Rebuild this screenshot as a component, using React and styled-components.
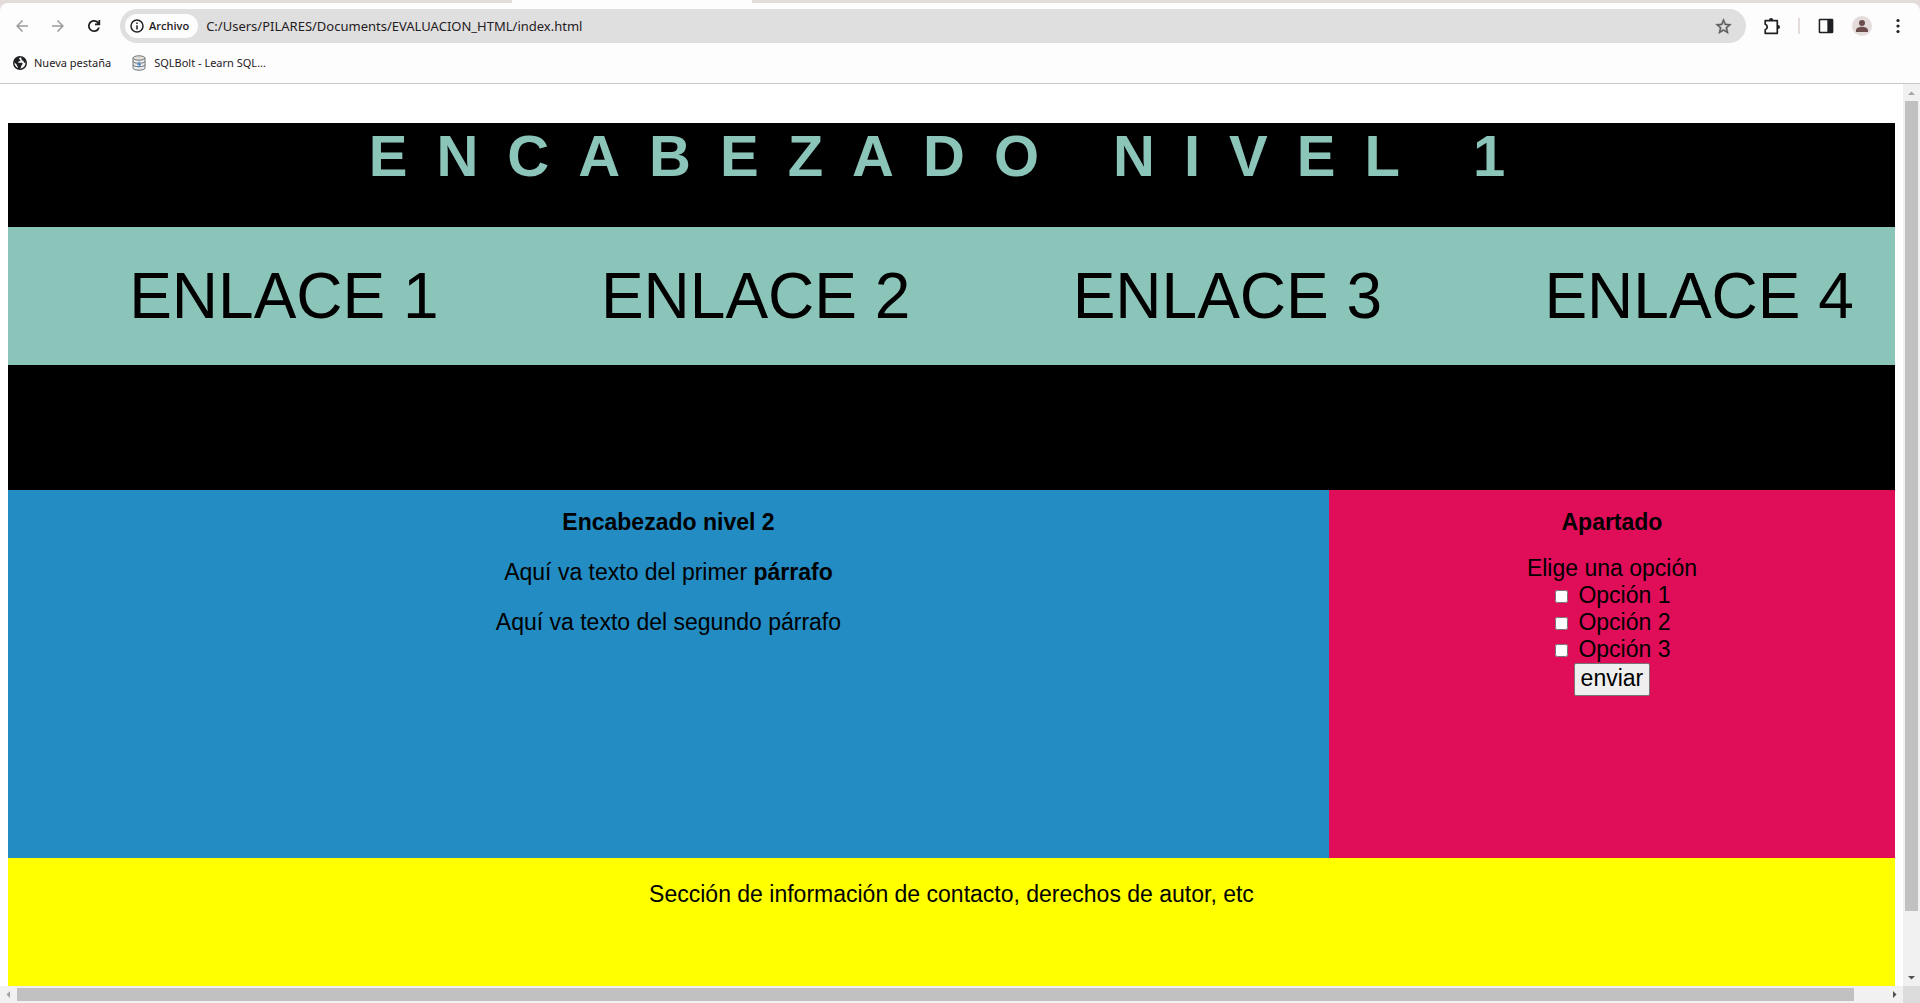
import React from "react";
import styled, { createGlobalStyle } from "styled-components";

const GlobalStyle = createGlobalStyle`
  * { box-sizing: border-box; }
  body { margin: 0; background: #fff; }
`;

const chipFont = `"Open Sans", "Noto Sans", sans-serif`;
const uiFont = `"Noto Sans", "Open Sans", sans-serif`;
const pageFont = `"Liberation Sans", Arial, sans-serif`;

const Window = styled.div`
  display: flex;
  flex-direction: column;
  height: 100vh;
  overflow: hidden;
  background: #e4dcda;
`;

const TabStrip = styled.div`
  display: flex;
  height: 3px;
  padding-left: 512px;
`;

const ActiveTab = styled.div`
  width: 240px;
  background: #fdfdfd;
`;

const Chrome = styled.header`
  flex: none;
  background: #fdfdfd;
  border-bottom: 1px solid #c9c9c9;
  border-radius: 8px 8px 0 0;
  font-family: ${uiFont};
  color: #1f2023;
`;

const Toolbar = styled.div`
  display: flex;
  align-items: center;
  padding: 6px 8px;
`;

const Group = styled.div`
  display: flex;
  align-items: center;
  gap: ${(p) => p.$gap}px;
`;

const IconButton = styled.button`
  display: grid;
  place-items: center;
  width: ${(p) => p.$width || 28}px;
  height: 28px;
  padding: 0;
  border: 0;
  background: none;
  color: ${(p) => p.$color || "#1f2023"};
`;

const AddressBar = styled.div`
  display: flex;
  align-items: center;
  flex: 1;
  height: 34px;
  margin: 0 12px;
  padding: 0 9px 0 5px;
  border-radius: 17px;
  background: #dfdfdf;
`;

const SiteChip = styled.button`
  display: flex;
  align-items: center;
  gap: 5px;
  height: 24px;
  padding: 0 9px 0 5px;
  border: 0;
  border-radius: 12px;
  background: #fdfdfd;
  color: #1f2023;
  font: 600 11px/24px ${chipFont};
`;

const Address = styled.input`
  flex: 1;
  min-width: 0;
  padding: 0 8px;
  border: 0;
  outline: 0;
  background: none;
  color: #1f2023;
  font: 13px/20px ${uiFont};
`;

const Separator = styled.span`
  width: 2px;
  height: 16px;
  background: #e4dcda;
`;

const Avatar = styled.span`
  display: grid;
  place-items: center;
  width: 20px;
  height: 20px;
  border-radius: 50%;
  background: #e4dcda;
`;

const Bookmarks = styled.nav`
  display: flex;
  gap: 20px;
  height: 34px;
  padding: 4px 13px 0;
`;

const Bookmark = styled.a`
  display: flex;
  align-items: center;
  gap: 7px;
  height: 20px;
  color: #1f2023;
  font: 11px/20px ${uiFont};
  text-decoration: none;
`;

const Viewport = styled.div`
  display: grid;
  grid-template: minmax(0, 1fr) 17px / minmax(0, 1fr) 17px;
  flex: 1;
  min-height: 0;
  background: #fff;
`;

const Page = styled.div`
  display: flex;
  flex-direction: column;
  overflow: hidden;
  padding: 39px 8px 0;
  background: #fff;
  color: #000;
  font: 23px/27px ${pageFont};
  text-align: center;
`;

const Banner = styled.header`
  flex: none;
  padding-bottom: 125px;
  background: #000;
`;

const Title = styled.h1`
  margin: 0;
  padding-bottom: 38px;
  color: #8bc4b9;
  font-size: 58px;
  line-height: 66px;
  letter-spacing: 29px;
  white-space: nowrap;
`;

const Links = styled.ul`
  display: grid;
  grid-template-columns: repeat(4, 1fr);
  margin: 0;
  padding: 32px 0;
  background: #8bc4b9;
  list-style: none;
`;

const LinkItem = styled.li`
  min-width: 0;
  padding-left: 80px;
`;

const PageLink = styled.a`
  color: #000;
  font-size: 64px;
  line-height: 74px;
  text-decoration: none;
  white-space: nowrap;
`;

const Columns = styled.div`
  display: grid;
  grid-template-columns: 7fr 3fr;
  flex: none;
  min-height: 368px;
`;

const Article = styled.main`
  display: flex;
  flex-direction: column;
  gap: 23px;
  padding-top: 19px;
  background: #228cc3;
`;

const Aside = styled.aside`
  padding-top: 19px;
  background: #e00d59;
`;

const Heading = styled.h2`
  margin: 0;
  font-size: 23px;
`;

const Text = styled.p`
  margin: 0;
`;

const Form = styled.form`
  display: flex;
  flex-direction: column;
  align-items: center;
  padding-top: 19px;
`;

const Option = styled.label`
  display: flex;
  align-items: center;
  gap: 10px;
  padding-left: 2px;
`;

const Check = styled.input`
  width: 13px;
  height: 13px;
  margin: 2px 0 0;
`;

const Submit = styled.button`
  height: 33px;
  padding: 1px 6px 3px;
  border: 1px solid #767676;
  border-radius: 2px;
  background: #efefef;
  color: #000;
  font: 23px/27px ${pageFont};
`;

const Footer = styled.footer`
  flex: 1;
  padding-top: 23px;
  background: #ff0;
`;

const Track = styled.div`
  display: flex;
  flex-direction: ${(p) => (p.$vertical ? "column" : "row")};
  background: #f1f1f1;
`;

const ArrowButton = styled.button`
  display: grid;
  place-items: center;
  flex: none;
  width: 17px;
  height: 17px;
  padding: 0;
  border: 0;
  background: none;
  color: ${(p) => (p.$active ? "#505050" : "#a3a3a3")};
`;

const Rail = styled.div`
  display: flex;
  flex-direction: ${(p) => (p.$vertical ? "column" : "row")};
  flex: 1;
  padding: ${(p) => (p.$vertical ? "0 2px" : "2px 0")};
`;

const Thumb = styled.div`
  flex: 0 0 ${(p) => p.$share}%;
  background: #c1c1c1;
`;

const Corner = styled.div`
  background: #dcdcdc;
`;

const Svg = ({ size = 16, box = 24, children, ...rest }) => (
  <svg width={size} height={size} viewBox={`0 0 ${box} ${box}`} fill="currentColor" aria-hidden="true" {...rest}>
    {children}
  </svg>
);

const BackIcon = () => (
  <Svg size={18}><path d="M20 11H7.8l5.6-5.6L12 4l-8 8 8 8 1.4-1.4L7.8 13H20z" /></Svg>
);
const ForwardIcon = () => (
  <Svg size={18}><path d="M4 11h12.2l-5.6-5.6L12 4l8 8-8 8-1.4-1.4 5.6-5.6H4z" /></Svg>
);
const ReloadIcon = () => (
  <Svg size={18}>
    <path d="M12 20a8 8 0 1 1 5.7-13.6L18 6.700V4h2.300v7h-7V8.700h3.300A5.700 5.700 0 1 0 17.400 14h2.350A8 8 0 0 1 12 20z" />
  </Svg>
);
const InfoIcon = () => (
  <Svg size={14} box={14}>
    <circle cx="7" cy="7" r="6" fill="none" stroke="currentColor" strokeWidth="1.500" />
    <path d="M6.250 6.200h1.500v4.200h-1.500zM6.250 3.500h1.500V5h-1.500z" />
  </Svg>
);
const StarIcon = () => (
  <Svg size={19}>
    <path
      d="M22 9.240l-7.190-.62L12 2 9.190 8.630 2 9.240l5.460 4.730L5.820 21 12 17.270 18.180 21l-1.630-7.030zM12 15.400l-3.760 2.270 1-4.280-3.320-2.880 4.380-.38L12 6.100l1.710 4.040 4.380.38-3.320 2.880 1 4.280z"
      stroke="currentColor"
      strokeWidth=".5"
    />
  </Svg>
);
const PuzzleIcon = () => (
  <Svg size={18} box={18}>
    <path d="M2.200 3.700h12.100v12.600H2.200v-3.500c2.700-.9 2.700-4.700 0-5.600z" fill="none" stroke="currentColor" strokeWidth="1.700" strokeLinejoin="round" />
    <path d="M6 3a2.100 2.100 0 0 1 4.200 0zM15 8a2 2 0 0 1 0 4z" />
  </Svg>
);
const PanelIcon = () => (
  <Svg size={16}>
    <path d="M3 1h18a2 2 0 0 1 2 2v18a2 2 0 0 1-2 2H3a2 2 0 0 1-2-2V3a2 2 0 0 1 2-2zm0.300 2.300v17.400h10.700V3.300z" fillRule="evenodd" />
  </Svg>
);
const PersonIcon = () => (
  <Svg size={18} color="#6d4c4e">
    <circle cx="12" cy="8" r="4" />
    <path d="M4 20v-2.500c0-3 5-4.500 8-4.500s8 1.500 8 4.500V20z" />
  </Svg>
);
const MenuIcon = () => (
  <Svg size={16} box={16}>
    <circle cx="8" cy="2.500" r="1.600" /><circle cx="8" cy="8" r="1.600" /><circle cx="8" cy="13.500" r="1.600" />
  </Svg>
);
const GlobeIcon = () => (
  <Svg size={14} box={14}>
    <circle cx="7" cy="7" r="7" />
    <path d="M8.200 1.600C5.500 1.700 5.800 3.500 7.200 3.900c.8.300-.2 1.500-1.500 1.500-.8 0-.7 1.100-.2 1.300h3c1.500 0 1.400 1.600.4 2.200-.9.400-.4 2.100-1.700 3.600 3.300 0 5.500-2.900 5.200-5.900-.5.300-1.500.2-1.700-.7-.2-1-.5-1.300-1.400-1.300-.8 0-.8-1.900-1.100-3zM1.500 6.600c-.2 2.500 1.300 4.600 3.300 5.400V10.500c-1-.2-1-1-1-1.700z" fill="#fdfdfd" />
  </Svg>
);
const DatabaseIcon = () => (
  <Svg size={16} box={16}>
    <path d="M2 3v10c0 2.900 12 2.900 12 0V3" fill="#e9ebec" stroke="#6f7579" />
    <ellipse cx="8" cy="3" rx="6" ry="2.200" fill="#e3dfd8" stroke="#6f7579" />
    <path d="M2 6.300c0 2.600 12 2.600 12 0M2 9.700c0 2.600 12 2.600 12 0" fill="none" stroke="#6f7579" />
    <path d="M8.800 5.800 5.900 9.700h2l-.8 3.500 3.300-4.500H8.200z" fill="#4385c6" />
  </Svg>
);

const arrowPaths = {
  up: "M5 11h7L8.500 7.500z",
  down: "M5 7h7l-3.500 3.500z",
  left: "M10 5v7L6.500 8.500z",
  right: "M7 5v7l3.500-3.500z",
};

const ScrollArrow = ({ direction, label, active }) => (
  <ArrowButton type="button" aria-label={label} $active={active}>
    <Svg size={17} box={17}><path d={arrowPaths[direction]} /></Svg>
  </ArrowButton>
);

const links = ["Enlace 1", "Enlace 2", "Enlace 3", "Enlace 4"];
const options = ["Opción 1", "Opción 2", "Opción 3"];

export default function App() {
  return (
    <Window>
      <GlobalStyle />
      <TabStrip><ActiveTab /></TabStrip>
      <Chrome>
        <Toolbar>
          <Group $gap={8}>
            <IconButton type="button" aria-label="Atrás" $color="#9b9b9b"><BackIcon /></IconButton>
            <IconButton type="button" aria-label="Adelante" $color="#9b9b9b"><ForwardIcon /></IconButton>
            <IconButton type="button" aria-label="Recargar"><ReloadIcon /></IconButton>
          </Group>
          <AddressBar>
            <SiteChip type="button"><InfoIcon />Archivo</SiteChip>
            <Address
              aria-label="Dirección"
              spellCheck={false}
              defaultValue="C:/Users/PILARES/Documents/EVALUACION_HTML/index.html"
            />
            <IconButton type="button" aria-label="Favorito" $color="#5c5d5f"><StarIcon /></IconButton>
          </AddressBar>
          <Group $gap={12}>
            <IconButton type="button" aria-label="Extensiones"><PuzzleIcon /></IconButton>
            <Separator />
            <IconButton type="button" aria-label="Panel lateral"><PanelIcon /></IconButton>
            <IconButton type="button" aria-label="Perfil" $width={20}><Avatar><PersonIcon /></Avatar></IconButton>
            <IconButton type="button" aria-label="Menú"><MenuIcon /></IconButton>
          </Group>
        </Toolbar>
        <Bookmarks>
          <Bookmark href="#"><GlobeIcon />Nueva pestaña</Bookmark>
          <Bookmark href="#"><DatabaseIcon />SQLBolt - Learn SQL...</Bookmark>
        </Bookmarks>
      </Chrome>
      <Viewport>
        <Page>
          <Banner>
            <Title>ENCABEZADO NIVEL 1</Title>
            <nav>
              <Links>
                {links.map((link) => (
                  <LinkItem key={link}><PageLink href="#">{link.toUpperCase()}</PageLink></LinkItem>
                ))}
              </Links>
            </nav>
          </Banner>
          <Columns>
            <Article>
              <Heading>Encabezado nivel 2</Heading>
              <Text>Aquí va texto del primer <b>párrafo</b></Text>
              <Text>Aquí va texto del segundo párrafo</Text>
            </Article>
            <Aside>
              <Heading>Apartado</Heading>
              <Form onSubmit={(e) => e.preventDefault()}>
                <Text>Elige una opción</Text>
                {options.map((option) => (
                  <Option key={option}><Check type="checkbox" />{option}</Option>
                ))}
                <Submit type="submit">enviar</Submit>
              </Form>
            </Aside>
          </Columns>
          <Footer>
            <Text>Sección de información de contacto, derechos de autor, etc</Text>
          </Footer>
        </Page>
        <Track $vertical>
          <ScrollArrow direction="up" label="Subir" />
          <Rail $vertical><Thumb $share={93.3} /></Rail>
          <ScrollArrow direction="down" label="Bajar" active />
        </Track>
        <Track>
          <ScrollArrow direction="left" label="Izquierda" />
          <Rail><Thumb $share={98.3} /></Rail>
          <ScrollArrow direction="right" label="Derecha" active />
        </Track>
        <Corner />
      </Viewport>
    </Window>
  );
}
